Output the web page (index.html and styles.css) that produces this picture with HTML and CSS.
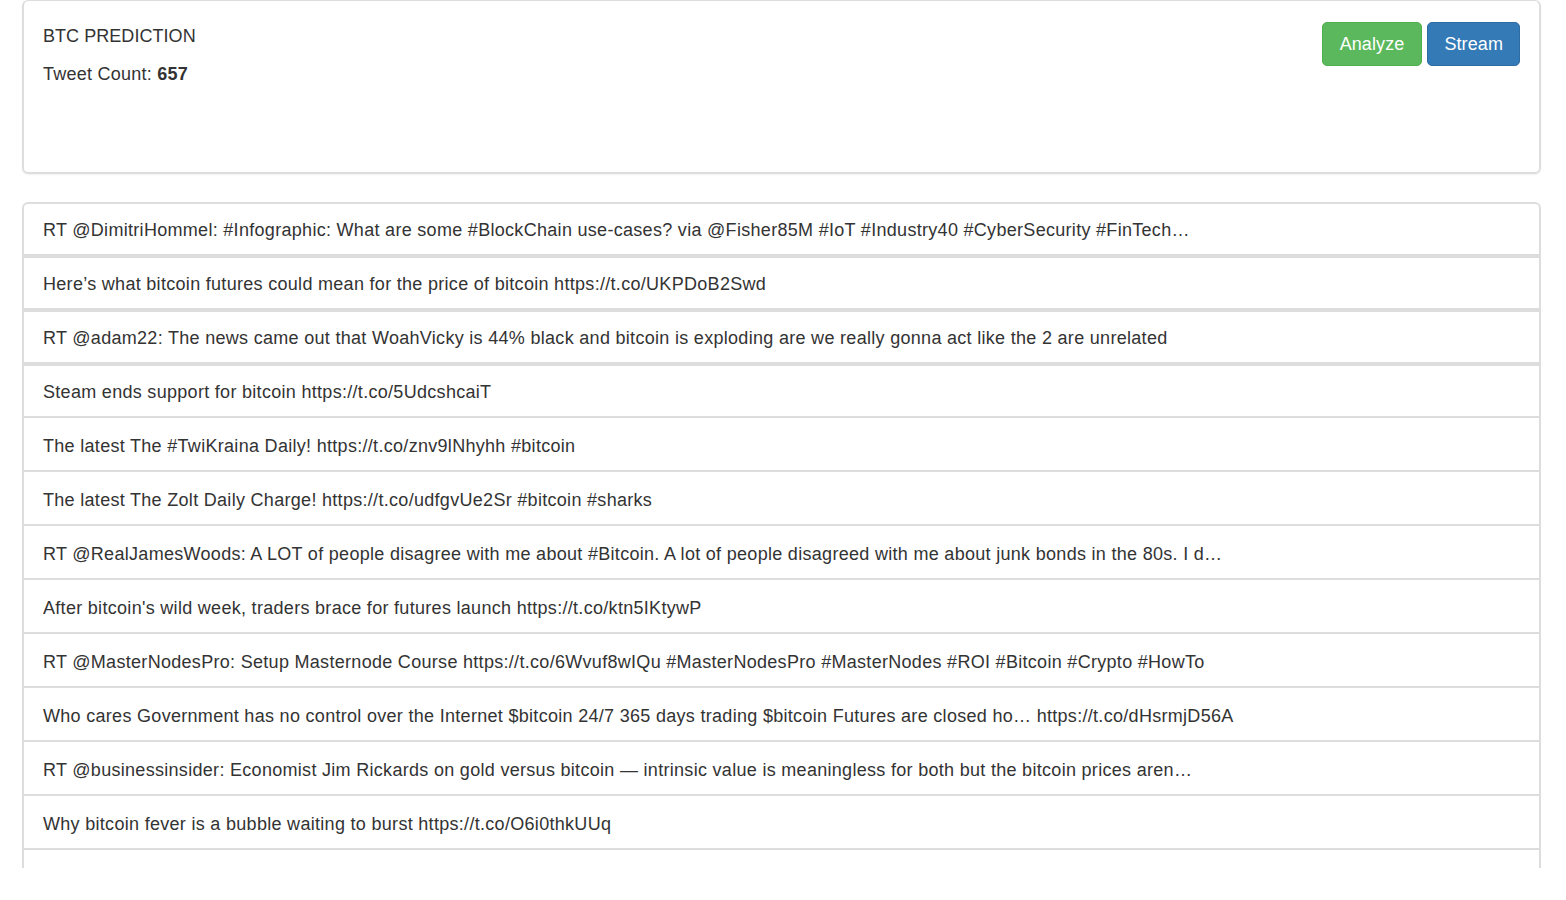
FILE: index.html
```html
<!DOCTYPE html>
<html>
<head>
<meta charset="utf-8">
<title>BTC Prediction</title>
<link rel="stylesheet" href="styles.css">
</head>
<body>
<div class="page">
  <section class="card">
    <div class="card-info">
      <div class="title">BTC PREDICTION</div>
      <div class="count">Tweet Count: <b>657</b></div>
    </div>
    <div class="actions">
      <button class="btn btn-success">Analyze</button>
      <button class="btn btn-primary">Stream</button>
    </div>
  </section>
  <ul class="tweets">
    <li class="tweet fresh">RT @DimitriHommel: #Infographic: What are some #BlockChain use-cases? via @Fisher85M #IoT #Industry40 #CyberSecurity #FinTech…</li>
    <li class="tweet fresh">Here’s what bitcoin futures could mean for the price of bitcoin https://t.co/UKPDoB2Swd</li>
    <li class="tweet fresh">RT @adam22: The news came out that WoahVicky is 44% black and bitcoin is exploding are we really gonna act like the 2 are unrelated</li>
    <li class="tweet seam">Steam ends support for bitcoin https://t.co/5UdcshcaiT</li>
    <li class="tweet">The latest The #TwiKraina Daily! https://t.co/znv9lNhyhh #bitcoin</li>
    <li class="tweet">The latest The Zolt Daily Charge! https://t.co/udfgvUe2Sr #bitcoin #sharks</li>
    <li class="tweet">RT @RealJamesWoods: A LOT of people disagree with me about #Bitcoin. A lot of people disagreed with me about junk bonds in the 80s. I d…</li>
    <li class="tweet">After bitcoin's wild week, traders brace for futures launch https://t.co/ktn5IKtywP</li>
    <li class="tweet">RT @MasterNodesPro: Setup Masternode Course https://t.co/6Wvuf8wIQu #MasterNodesPro #MasterNodes #ROI #Bitcoin #Crypto #HowTo</li>
    <li class="tweet">Who cares Government has no control over the Internet $bitcoin 24/7 365 days trading $bitcoin Futures are closed ho… https://t.co/dHsrmjD56A</li>
    <li class="tweet">RT @businessinsider: Economist Jim Rickards on gold versus bitcoin — intrinsic value is meaningless for both but the bitcoin prices aren…</li>
    <li class="tweet">Why bitcoin fever is a bubble waiting to burst https://t.co/O6i0thkUUq</li>
    <li class="tweet">&nbsp;</li>
  </ul>
</div>
</body>
</html>
```

FILE: styles.css
```css
* {
  box-sizing: border-box;
}

html, body {
  margin: 0;
  padding: 0;
  background: #fff;
}

body {
  font-family: "Liberation Sans", Arial, Helvetica, sans-serif;
  font-size: 18px;
  line-height: 26px;
  color: #333;
}

.page {
  margin: 0 25px 0 22px;
}

.card {
  height: 174px;
  border: 2px solid #ddd;
  border-top-width: 1px;
  border-radius: 6px;
  padding: 21px 19px 20px 19px;
  display: flex;
  justify-content: space-between;
  align-items: flex-start;
  box-shadow: 0 1px 2px rgba(0, 0, 0, 0.05);
}

.card-info {
  display: flex;
  flex-direction: column;
  gap: 12px;
  padding-top: 1px;
}

.title {
  letter-spacing: 0.05px;
}

.count {
  letter-spacing: 0.25px;
}

.count b {
  font-weight: bold;
}

.actions {
  display: flex;
  gap: 5px;
}

.btn {
  font-family: inherit;
  font-size: 18px;
  line-height: 26px;
  padding: 8px 17px;
  border: 1px solid transparent;
  border-radius: 5px;
  color: #fff;
  cursor: pointer;
  letter-spacing: 0.1px;
}

.btn-success {
  background: #5cb85c;
  border-color: #4cae4c;
}

.btn-primary {
  background: #337ab7;
  border-color: #2e6da4;
  padding-left: 16px;
  padding-right: 16px;
}

.tweets {
  list-style: none;
  margin: 28px 0 0 0;
  padding: 0;
  height: 666px;
  overflow: hidden;
}

.tweet {
  border: 2px solid #ddd;
  padding: 15px 19px 11px 19px;
  margin-bottom: -2px;
  white-space: nowrap;
  letter-spacing: 0.3px;
}

.tweet:first-child {
  border-top-left-radius: 6px;
  border-top-right-radius: 6px;
}

.tweet.fresh {
  padding: 13px 19px 11px 19px;
  margin-bottom: 0;
}

.tweet.seam {
  padding: 13px 19px 11px 19px;
}
```
